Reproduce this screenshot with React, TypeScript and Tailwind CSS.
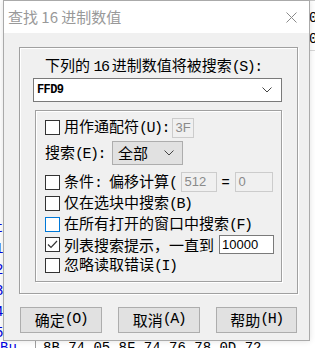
import React from 'react';

const cjk = "font-['Noto_Sans_CJK_SC',sans-serif]";
const etched = 'border border-[#a0a0a0] shadow-[inset_1px_1px_0_#ffffff,1px_1px_0_#ffffff]';

// half-width latin parts, narrow like the dialog font
function L({ children }: { children: React.ReactNode }) {
  return <span className="font-['Liberation_Mono',monospace] tracking-[-1.5px]">{children}</span>;
}

function Box({ checked, focus }: { checked?: boolean; focus?: boolean }) {
  return (
    <span
      className={`w-[15px] h-[15px] shrink-0 bg-white border flex items-center justify-center ${
        focus ? 'border-[#0078d7]' : 'border-[#333333]'
      }`}
    >
      {checked && (
        <svg width="13" height="13" viewBox="0 0 13 13">
          <polyline points="2,6.5 5,9.5 11,3" fill="none" stroke="#333333" strokeWidth="1.2" />
        </svg>
      )}
    </span>
  );
}

function Chevron() {
  return (
    <svg width="10" height="6" viewBox="0 0 10 6">
      <polyline points="0.5,0.5 5,5 9.5,0.5" fill="none" stroke="#444444" strokeWidth="1" />
    </svg>
  );
}

export default function App() {
  return (
    <div className="relative w-[315px] h-[348px] overflow-hidden bg-white">
      {/* underlying hex editor */}
      <div className="absolute left-[-5px] top-[218px] text-[#0000e0] font-['Liberation_Mono',monospace] text-[14px] leading-[21px]">
        <div>t</div>
        <div>1</div>
        <div>2</div>
        <div>3</div>
        <div>4</div>
        <div>5</div>
      </div>
      <div className="absolute left-0 top-[338px] w-[315px] flex items-start font-['Liberation_Mono',monospace] text-[14px] leading-[20px]">
        <span className="w-[35px] text-[#0000e0]">Bu</span>
        <span className="w-px h-[20px] bg-[#a0a0a0]" />
        <span className="pl-[7px] text-black whitespace-pre">8B 74 05 8F 74 76 78 0D 72</span>
      </div>
      <div className="absolute left-[309px] top-[8px] font-['Liberation_Mono',monospace] text-[14px] leading-[21px] text-black">
        <div>0</div>
        <div>0</div>
      </div>
      <div className="absolute left-[270px] top-0 w-[45px] h-px bg-[#c8c8c8]" />
      <div className="absolute left-[309px] top-[50px] w-[6px] h-px bg-[#d8d8d8]" />

      {/* dialog */}
      <div className="absolute left-[3px] top-0 w-[307px] h-[341px] border border-[#aaaaaa] bg-[#f0f0f0] shadow-[0_0_6px_rgba(0,0,0,0.12)] flex flex-col text-[15px] leading-[18px] text-black">
        <div className={`h-[32px] bg-white flex items-center justify-between pl-[4px] pr-[12px] text-[#999999] ${cjk}`}>
          <span>查找 16 进制数值</span>
          <svg width="11" height="11" viewBox="0 0 11 11">
            <path d="M0.5 0.5 L10.5 10.5 M10.5 0.5 L0.5 10.5" stroke="#8a8a8a" strokeWidth="1" />
          </svg>
        </div>

        <div className={`flex flex-col ${cjk}`}>
          <div className={`ml-[15px] mt-[14px] w-[279px] h-[247px] pl-[13px] pt-[8px] flex flex-col ${etched}`}>
            <div className="ml-[12px] h-[18px]">
              下列的 <L>16</L> 进制数值将被搜索<L>(S):</L>
            </div>
            <div className="mt-[4px] w-[249px] h-[24px] bg-white border border-[#7a7a7a] flex items-center justify-between pl-[3px] pr-[9px]">
              <span className="font-['Liberation_Mono',monospace] font-bold text-[12px] tracking-[-0.6px]">FFD9</span>
              <Chevron />
            </div>

            <div className={`ml-[2px] mt-[8px] w-[247px] h-[172px] pl-[9px] pt-[6px] flex flex-col ${etched}`}>
              <div className="h-[21px] flex items-center">
                <Box />
                <span className="ml-[4px]">用作通配符<L>(U):</L></span>
                <span className="ml-[3px] w-[22px] h-[20px] border border-[#cccccc] flex items-center justify-center font-['Liberation_Sans',sans-serif] text-[13px] text-[#8a8a8a]">
                  3F
                </span>
              </div>

              <div className="mt-[3px] h-[24px] flex items-center">
                <span>搜索<L>(E):</L></span>
                <span className="ml-[7px] w-[71px] h-[24px] bg-[#e1e1e1] border border-[#adadad] flex items-center justify-between pl-[5px] pr-[8px]">
                  <span>全部</span>
                  <Chevron />
                </span>
              </div>

              <div className="mt-[6px] h-[22px] flex items-center">
                <Box />
                <span className="ml-[4px]">条件<L>: </L>偏移计算<L>(</L></span>
                <span className="ml-[4px] w-[36px] h-[20px] border border-[#cccccc] flex items-center pl-[3px] font-['Liberation_Sans',sans-serif] text-[13px] text-[#8a8a8a]">
                  512
                </span>
                <span className="w-[18px] text-center font-['Liberation_Sans',sans-serif] text-[14px]">=</span>
                <span className="w-[38px] h-[20px] border border-[#cccccc] flex items-center pl-[3px] font-['Liberation_Sans',sans-serif] text-[13px] text-[#8a8a8a]">
                  0
                </span>
              </div>

              <div className="h-[21px] flex items-center">
                <Box />
                <span className="ml-[4px]">仅在选块中搜索<L>(B)</L></span>
              </div>

              <div className="h-[20px] flex items-center">
                <Box focus />
                <span className="ml-[4px]">在所有打开的窗口中搜索<L>(F)</L></span>
              </div>

              <div className="h-[21px] flex items-center">
                <Box checked />
                <span className="ml-[4px]">列表搜索提示，一直到</span>
                <span className="ml-[5px] w-[55px] h-[19px] bg-white border border-[#7a7a7a] flex items-center pl-[2px] font-['Liberation_Sans',sans-serif] text-[13px]">
                  10000
                </span>
              </div>

              <div className="h-[21px] flex items-center">
                <Box />
                <span className="ml-[4px]">忽略读取错误<L>(I)</L></span>
              </div>
            </div>
          </div>

          <div className="ml-[16px] mt-[13px] flex gap-[16px]">
            <button className="w-[82px] h-[26px] bg-[#e1e1e1] border border-[#adadad] flex items-center justify-center">
              确定<L>(O)</L>
            </button>
            <button className="w-[82px] h-[26px] bg-[#e1e1e1] border border-[#adadad] flex items-center justify-center">
              取消<L>(A)</L>
            </button>
            <button className="w-[81px] h-[26px] bg-[#e1e1e1] border border-[#adadad] flex items-center justify-center">
              帮助<L>(H)</L>
            </button>
          </div>
        </div>
      </div>
    </div>
  );
}
